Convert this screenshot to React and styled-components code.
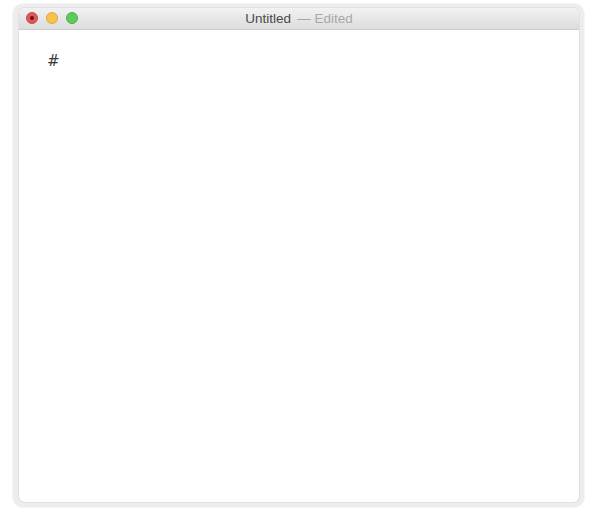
import React from "react";
import styled, { createGlobalStyle } from "styled-components";

const GlobalStyle = createGlobalStyle`
	html, body {
		margin: 0;
		padding: 0;
		background: #ffffff;
	}
`;

const Page = styled.div`
	width: 598px;
	height: 512px;
	box-sizing: border-box;
	padding: 3px 13px 4px 12px;
	display: flex;
`;

const Frame = styled.div`
	flex: 1;
	display: flex;
	flex-direction: column;
	box-sizing: border-box;
	padding: 4px 5px 5px 6px;
	background: #ededed;
	border: 1px solid #f4f4f4;
	border-radius: 11px;
`;

const Inner = styled.div`
	flex: 1;
	display: flex;
	flex-direction: column;
	border-radius: 6px;
	overflow: hidden;
	background: #ffffff;
	box-shadow: 0 0 0 1px #e0e0e0;
`;

const TitleBar = styled.div`
	position: relative;
	height: 21px;
	flex-shrink: 0;
	display: flex;
	align-items: center;
	justify-content: center;
	background: linear-gradient(#f2f2f2, #dcdcdc);
	border-bottom: 1px solid #cecece;
	font-family: "Liberation Sans", Arial, sans-serif;
	font-size: 13.5px;
`;

const Lights = styled.div`
	position: absolute;
	left: 7px;
	top: 4px;
	display: flex;
	gap: 8px;
`;

const Light = styled.div`
	width: 12px;
	height: 12px;
	border-radius: 50%;
	box-sizing: border-box;
	background: ${(p) => p.color};
	border: 1px solid ${(p) => p.edge};
	display: flex;
	align-items: center;
	justify-content: center;
`;

const Dot = styled.div`
	width: 4px;
	height: 4px;
	border-radius: 50%;
	background: #7a0e0b;
`;

const Title = styled.span`
	color: #4a4a4a;
`;

const Edited = styled.span`
	color: #a8a8a8;
	margin-left: 6px;
`;

const Content = styled.div`
	flex: 1;
	padding: 22px 0 0 28px;
	font-family: "DejaVu Sans", sans-serif;
	font-size: 15px;
	color: #3a3a3a;
`;

const App = () => {
	return (
		<>
			<GlobalStyle />
			<Page>
				<Frame>
					<Inner>
						<TitleBar>
							<Lights>
								<Light color="#dc5a5e" edge="#c64a4e">
									<Dot />
								</Light>
								<Light color="#f6c14f" edge="#e0a93a" />
								<Light color="#5fcb5a" edge="#4fb04a" />
							</Lights>
							<Title>Untitled</Title>
							<Edited>— Edited</Edited>
						</TitleBar>
						<Content>#</Content>
					</Inner>
				</Frame>
			</Page>
		</>
	);
};

export default App;
